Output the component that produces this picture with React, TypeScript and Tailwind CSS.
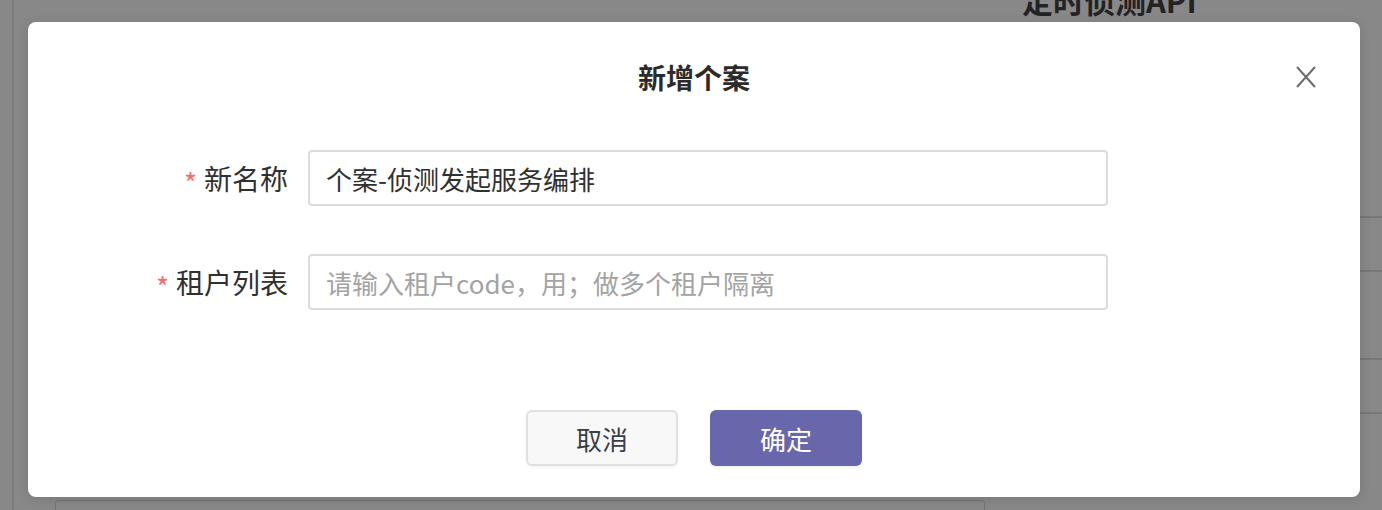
import React from "react";

const FONT = '"Noto Sans CJK SC", "Noto Sans", sans-serif';

function Row({ label, children }: { label: string; children: React.ReactNode }) {
  return (
    <div className="flex items-center h-[56px]">
      <div className="w-[280px] flex items-center justify-end pr-[20px] text-[28px] text-[#303030]">
        <span className="text-[#f56c6c] mr-[7px] text-[28px] leading-none translate-y-[4px]">*</span>
        <span>{label}</span>
      </div>
      {children}
    </div>
  );
}

export default function App() {
  return (
    <div
      className="relative w-[1382px] h-[510px] overflow-hidden bg-[#888888]"
      style={{ fontFamily: FONT }}
    >
      {/* background page (seen through the overlay) */}
      <div className="absolute left-[12px] top-0 bottom-0 w-[2px] bg-[#7d7d7d]" />
      <div className="absolute left-[1022px] top-[-24px] text-[31px] font-bold text-[#232323] whitespace-nowrap leading-[48px]">
        定时侦测API
      </div>
      <div className="absolute left-[1360px] right-0 top-[216px] h-[2px] bg-[#777777]" />
      <div className="absolute left-[1360px] right-0 top-[270px] h-[2px] bg-[#777777]" />
      <div className="absolute left-[1360px] right-0 top-[358px] h-[2px] bg-[#777777]" />
      <div className="absolute left-[1360px] right-0 top-[412px] h-[2px] bg-[#777777]" />
      <div className="absolute left-[55px] top-[500px] w-[930px] h-[30px] border border-[#747474] rounded-[3px]" />

      {/* modal */}
      <div className="absolute left-[28px] top-[22px] w-[1332px] h-[475px] bg-white rounded-[8px] shadow-[0_2px_12px_rgba(0,0,0,0.12)] flex flex-col">
        <div className="relative h-[112px] flex items-center justify-center pb-[2px]">
          <span className="text-[28px] font-bold text-[#2b2b2b]">新增个案</span>
          <button className="absolute right-[44px] top-[44px] w-[20px] h-[22px] flex items-center justify-center">
            <svg width="20" height="22" viewBox="0 0 20 22">
              <path d="M1 1 L19 21 M19 1 L1 21" stroke="#6b6b6b" strokeWidth="2" fill="none" />
            </svg>
          </button>
        </div>
        <div className="flex flex-col gap-[48px] pt-[16px]">
          <Row label="新名称">
            <div className="w-[800px] h-[56px] border-2 border-[#dcdcdc] rounded-[4px] flex items-center px-[16px] text-[26px] text-[#303030]">
              个案-侦测发起服务编排
            </div>
          </Row>
          <Row label="租户列表">
            <div className="w-[800px] h-[56px] border-2 border-[#dcdcdc] rounded-[4px] flex items-center px-[16px] text-[26px] text-[#a3a3a3]">
              请输入租户code，用；做多个租户隔离
            </div>
          </Row>
        </div>
        <div className="flex justify-center gap-[32px] mt-[100px]">
          <button className="w-[152px] h-[56px] rounded-[6px] border-2 border-[#e0e0e0] bg-[#f8f8f8] text-[26px] text-[#3a3f45] shadow-[0_2px_3px_rgba(0,0,0,0.04)]">
            取消
          </button>
          <button className="w-[152px] h-[56px] rounded-[6px] bg-[#6867ac] text-[26px] text-white shadow-[0_2px_3px_rgba(0,0,0,0.06)]">
            确定
          </button>
        </div>
      </div>
    </div>
  );
}
